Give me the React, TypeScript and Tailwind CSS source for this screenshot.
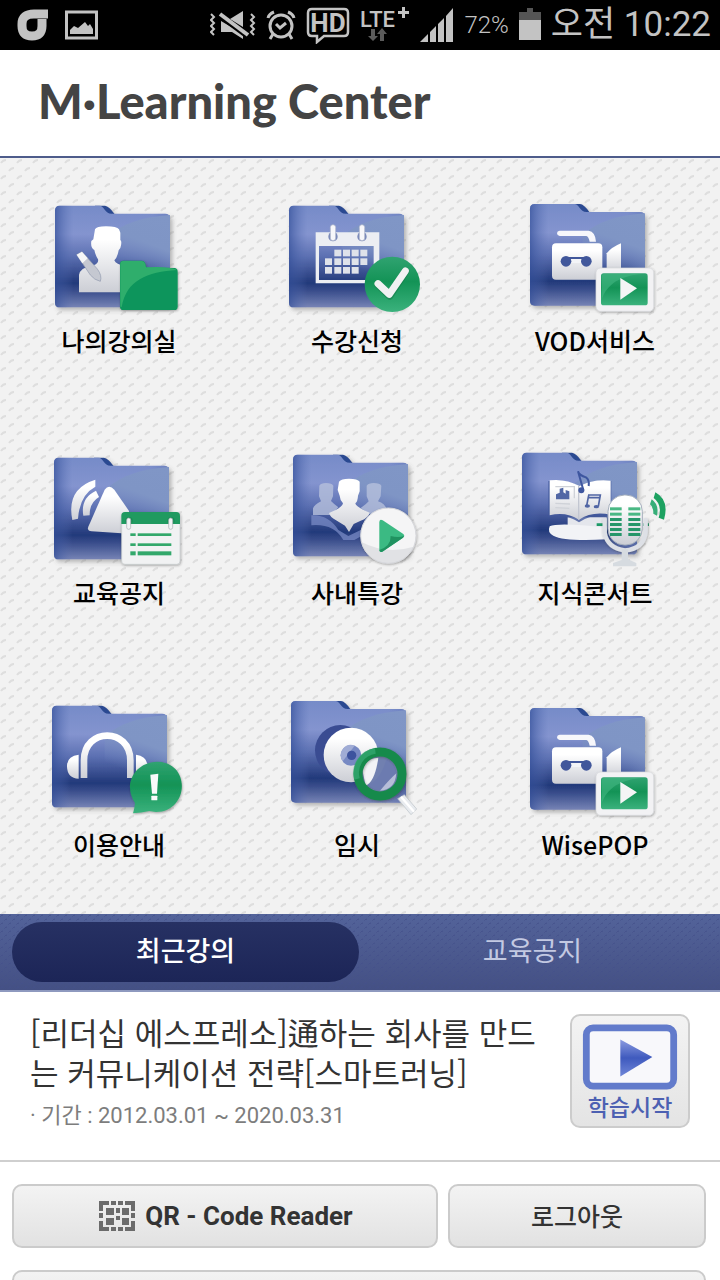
import React from 'react';

interface MenuEntry {
  label: string;
  viewBox: string;
  icon: React.ReactNode;
}

const IconDefs = () => (
  <svg className="absolute h-0 w-0" aria-hidden="true">
    <defs>
      <linearGradient id="folder" x1="0" y1="0" x2="0" y2="1">
        <stop offset="0" stopColor="#768bc8" />
        <stop offset="0.28" stopColor="#8494cf" />
        <stop offset="0.5" stopColor="#5c70b2" />
        <stop offset="0.76" stopColor="#22397a" />
        <stop offset="0.84" stopColor="#3a4e8c" />
        <stop offset="1" stopColor="#7683b5" />
      </linearGradient>
      <linearGradient id="folderEdge" x1="0" y1="0" x2="1" y2="0">
        <stop offset="0" stopColor="#34509a" stopOpacity="0.7" />
        <stop offset="0.16" stopColor="#5870b5" stopOpacity="0" />
        <stop offset="0.85" stopColor="#5870b5" stopOpacity="0" />
        <stop offset="1" stopColor="#6377b4" stopOpacity="0.5" />
      </linearGradient>
      <linearGradient id="shine" x1="0.9" y1="0" x2="0.5" y2="1">
        <stop offset="0" stopColor="#8096c6" />
        <stop offset="0.5" stopColor="#7f95c5" />
        <stop offset="1" stopColor="#6f84bc" stopOpacity="0" />
      </linearGradient>
      <linearGradient id="silver" x1="0" y1="0" x2="0" y2="1">
        <stop offset="0.2" stopColor="#ffffff" />
        <stop offset="1" stopColor="#ccced5" />
      </linearGradient>
      <linearGradient id="greenDown" x1="0" y1="0" x2="0" y2="1">
        <stop offset="0" stopColor="#30a371" />
        <stop offset="0.45" stopColor="#139356" />
        <stop offset="1" stopColor="#3bb27d" />
      </linearGradient>
      <linearGradient id="playBlue" x1="0" y1="0" x2="0" y2="1">
        <stop offset="0" stopColor="#8b9be0" />
        <stop offset="0.5" stopColor="#3f5abe" />
        <stop offset="1" stopColor="#6f86d8" />
      </linearGradient>
      <filter id="shadow" x="-20%" y="-20%" width="150%" height="150%">
        <feDropShadow dx="7" dy="8" stdDeviation="6" floodColor="#555" floodOpacity="0.4" />
      </filter>
      <filter id="softShadow" x="-20%" y="-20%" width="150%" height="150%">
        <feDropShadow dx="2" dy="3" stdDeviation="3" floodColor="#333" floodOpacity="0.4" />
      </filter>
    </defs>
  </svg>
);

const Folder = ({ x, y }: { x: number; y: number }) => (
  <g transform={`translate(${x} ${y})`}>
    <g filter="url(#shadow)">
      <path d="M120 0H150Q162 1 178 24V40H120Z" fill="#2c4a91" />
      <path
        d="M14 0H133C148 0 149 24 170 24H330Q345 24 345 38V291Q345 305 331 305H14Q0 305 0 291V14Q0 0 14 0Z"
        fill="url(#folder)"
      />
    </g>
    <path
      d="M14 0H133C148 0 149 24 170 24H330Q345 24 345 38V291Q345 305 331 305H14Q0 305 0 291V14Q0 0 14 0Z"
      fill="url(#folderEdge)"
    />
    <path d="M158 92C205 52 262 34 345 28V205H158Z" fill="url(#shine)" />
  </g>
);

const ClassroomIcon = () => (
  <>
    <Folder x={45} y={47} />
    <path
      d="M165 118Q169 109 198 109Q231 109 237 118L241 128V150Q247 155 241 174L236 181Q232 203 223 211Q228 224 255 228V307H117V255Q120 233 160 226Q177 220 174 208Q166 195 163 180Q151 173 154 153L160 148Z"
      fill="url(#silver)"
    />
    <path d="M110 194L126 185L172 237Q187 257 181 274Q163 270 151 255Z" fill="#c5c8d1" stroke="#9098ae" strokeWidth="2" />
    <path d="M110 194L126 185L143 205L127 220Z" fill="#f5f6f8" />
    <g filter="url(#softShadow)">
      <path d="M250 212H306Q316 212 318 230L324 234H403Q413 234 413 245V350Q413 360 403 360H250Q240 360 240 350V222Q240 212 250 212Z" fill="#10955c" />
    </g>
    <path d="M250 213H306Q315 213 318 232Q390 228 412 240C320 246 260 270 245 351L241 350V222Q241 213 250 213Z" fill="#2fae6c" />
  </>
);

const ApplyIcon = () => {
  const cells = [
    [178, 179], [204, 179], [230, 179], [256, 179],
    [150, 205], [178, 205], [204, 205], [230, 205], [256, 205],
    [150, 231], [178, 231], [204, 231], [230, 231],
  ];
  return (
    <>
      <Folder x={42} y={47} />
      <path d="M122 127H313V280H122ZM132 168V270H296V168Z" fill="#eceef3" fillRule="evenodd" />
      <circle cx="174" cy="140" r="14" fill="#7787b8" />
      <circle cx="261" cy="140" r="14" fill="#7787b8" />
      <rect x="166" y="104" width="16" height="48" rx="8" fill="#f7f7fa" stroke="#a9b0c7" strokeWidth="2" />
      <rect x="253" y="104" width="16" height="48" rx="8" fill="#f7f7fa" stroke="#a9b0c7" strokeWidth="2" />
      {cells.map(([x, y]) => (
        <rect key={`${x}-${y}`} x={x} y={y} width="21" height="20" fill="#dfe2ea" />
      ))}
      <circle cx="352" cy="283" r="83" fill="url(#greenDown)" />
      <path d="M310 284L344 317L391 245" fill="none" stroke="#137545" strokeWidth="24" strokeLinecap="round" strokeLinejoin="round" opacity="0.5" />
      <path d="M309 281L343 313L391 243" fill="none" stroke="#f0f1f2" strokeWidth="21" strokeLinecap="round" strokeLinejoin="round" />
    </>
  );
};

const VideoIcon = () => (
  <>
    <Folder x={60} y={42} />
    <path d="M149 122H236Q256 125 258 155H239Q236 140 229 138H149Q141 137 141 130Q141 123 149 122Z" fill="#f7f7fb" />
    <rect x="126" y="160" width="151" height="109" rx="12" fill="url(#silver)" />
    <path d="M290 190Q304 172 333 160V250H290Z" fill="url(#silver)" />
    <path d="M168 201H230V215H168Z" fill="#41579b" />
    <path d="M180 207H217V219H180Z" fill="#f3f4f7" />
    <circle cx="168" cy="214" r="16" fill="#41579b" />
    <circle cx="229" cy="214" r="16" fill="#41579b" />
    <rect x="258" y="234" width="173" height="130" rx="14" fill="#f2f2f4" stroke="#d8dadd" strokeWidth="2" filter="url(#softShadow)" />
    <rect x="273" y="250" width="140" height="96" rx="8" fill="url(#greenDown)" />
    <path d="M275 330C290 280 335 257 395 252L282 252Q275 252 275 260Z" fill="#42b782" opacity="0.6" />
    <path d="M331 264L381 295L331 329Z" fill="#f4f5f5" />
  </>
);

const NoticeIcon = () => (
  <>
    <Folder x={42} y={53} />
    <path d="M166 119V140Q119 165 114 236L97 240Q78 146 166 119Z" fill="url(#silver)" />
    <path d="M168 152L177 171Q148 188 149 226L130 227Q121 174 168 152Z" fill="url(#silver)" />
    <path d="M194 149Q207 132 223 149L267 213V281L155 274Q140 273 145 260Z" fill="url(#silver)" />
    <rect x="245" y="218" width="175" height="155" rx="10" fill="#f1f2f3" stroke="#c6cacc" strokeWidth="2" filter="url(#softShadow)" />
    <path d="M244 252V227Q244 216 255 216H409Q420 216 420 227V252Z" fill="#209a60" />
    {[265, 391].map((x) => (
      <g key={x}>
        <circle cx={x + 2} cy="242" r="11" fill="#0e784a" opacity="0.4" />
        <rect x={x - 5} y="234" width="12" height="34" rx="6" fill="#f2f3f5" stroke="#a7adb0" strokeWidth="2" />
      </g>
    ))}
    {[280, 310, 334].map((y, i) => (
      <g key={y} fill="#32a86b">
        <rect x="271" y={y} width="16" height={i === 2 ? 12 : 8} />
        <rect x="293" y={y} width="101" height={i === 2 ? 12 : 8} />
      </g>
    ))}
  </>
);

const LectureIcon = () => (
  <>
    <Folder x={54} y={44} />
    <g fill="#b7c0dc">
      <path d="M133 137Q137 129 153 129Q171 129 175 137L174 169L168 183Q178 193 190 202L168 225H114V205Q118 194 138 184L132 169Z" opacity="0.8" />
      <path d="M275 137Q280 129 296 129Q315 129 319 137L317 169L309 184Q330 190 337 212L284 222L257 204Q274 193 281 184L275 169Z" opacity="0.8" />
    </g>
    <path d="M109 226Q160 223 190 270L220 288L265 266V285L238 300H205Q176 250 109 256Z" fill="#7889c4" opacity="0.75" />
    <path
      d="M192 125Q198 116 222 116Q248 116 254 125V154L249 167Q248 185 241 190Q242 201 284 218Q281 233 257 242L236 252L222 276L210 257L182 240Q166 232 162 219Q201 204 204 190Q195 181 194 167L188 150Z"
      fill="url(#silver)"
    />
    <circle cx="340" cy="287" r="83" fill="#f5f5f6" stroke="#d7d8dc" strokeWidth="3" filter="url(#softShadow)" />
    <path d="M259 306A83 83 0 0 0 416 320Q335 345 259 306Z" fill="#d4d5da" opacity="0.6" />
    <path d="M313 246Q314 236 323 241L385 282Q391 288 384 293L322 335Q313 339 313 330Z" fill="#3bba83" />
    <path d="M387 288L384 293L322 335Q315 338 313 330Q348 318 347 288Q370 294 387 288Z" fill="#209260" />
  </>
);

const ConcertIcon = () => (
  <>
    <Folder x={36} y={38} />
    <path d="M173 232H290V275H173Z" fill="#e4e6ec" />
    <path d="M119 259Q145 247 290 263V298Q165 305 130 287Q111 278 119 259Z" fill="#f2f3f6" />
    <path d="M115 231V123Q164 116 209 139Q248 116 304 123V229Q245 219 207 247Q167 220 115 231Z" fill="#41579b" opacity="0.8" />
    <path d="M119 226V121Q166 115 209 138Q250 116 302 122V224Q245 213 207 239Q168 214 119 226Z" fill="url(#silver)" />
    <path d="M206 138V239" stroke="#c2c6d1" strokeWidth="4" />
    <path d="M136 140H193V175M136 190L180 192M136 203L178 205" fill="none" stroke="#cfd2d8" strokeWidth="4" />
    <path d="M138 178V163L149 158V146L160 143V157L167 161V150L178 154V178Z" fill="#5267a5" />
    <path d="M234 165H271L265 199M236 166L230 197M234 173H270" fill="none" stroke="#5065a4" strokeWidth="5" />
    <ellipse cx="232" cy="198" rx="8" ry="5" fill="#5065a4" />
    <ellipse cx="259" cy="200" rx="8" ry="5" fill="#5065a4" />
    <path d="M204 94L220 150M204 94Q208 106 228 112Q239 120 236 138" fill="none" stroke="#3e569f" strokeWidth="6" />
    <circle cx="214" cy="151" r="9" fill="#3e569f" />
    <path d="M260 254H290M400 254H417" stroke="#1d9b67" strokeWidth="8" />
    <path d="M284 235V278Q292 325 345 331Q402 326 407 275V235" fill="none" stroke="#dde0e6" strokeWidth="13" filter="url(#softShadow)" />
    <path d="M335 328H354V358L379 369V379H309V369L335 360Z" fill="#d6dbe0" />
    <rect x="294" y="165" width="103" height="150" rx="49" fill="url(#silver)" stroke="#a4aebc" strokeWidth="3" />
    {[202, 218, 234, 249, 264, 279].map((y, i) => (
      <g key={y} fill={i < 2 ? '#49b884' : '#26966a'}>
        <rect x="300" y={y} width="35" height="9" />
        <rect x="355" y={y} width="36" height="9" />
      </g>
    ))}
    <path d="M436 157Q479 180 462 239L446 233Q458 194 431 174Z" fill="#1da261" />
    <path d="M425 178Q448 194 441 227L430 221Q430 199 420 193Z" fill="#37ae78" />
  </>
);

const GuideIcon = () => (
  <>
    <Folder x={36} y={47} />
    <path d="M132 264V211C132 112 271 112 271 211V264" fill="none" stroke="url(#silver)" strokeWidth="20" />
    <path d="M116 194V266Q82 264 81 230Q80 198 116 194Z" fill="url(#silver)" />
    <path d="M288 194V266Q322 264 323 230Q322 198 288 194Z" fill="url(#silver)" />
    <path d="M350 215C454 215 448 365 348 366L328 363Q303 368 279 370Q283 359 285 339C248 284 283 218 350 215Z" fill="url(#greenDown)" filter="url(#softShadow)" />
    <path d="M331 254L355 251L351 311H336Z" fill="#f8fafa" />
    <rect x="334" y="317" width="18" height="14" rx="2" fill="#f8fafa" />
  </>
);

const SearchIcon = () => (
  <>
    <Folder x={48} y={33} />
    <circle cx="196" cy="181" r="76" fill="#3a4c92" />
    <circle cx="228" cy="195" r="82" fill="url(#silver)" />
    <circle cx="228" cy="196" r="31" fill="#7789c3" />
    <path d="M203 214A31 31 0 0 1 239 167Z" fill="#a0acd5" />
    <circle cx="230" cy="196" r="14" fill="#3d539e" />
    <circle cx="314" cy="250" r="57" fill="#7180b0" />
    <path d="M272 287Q300 275 310 203Q272 205 262 240Z" fill="#f2f3f6" />
    <path d="M335 203Q366 220 364 260Q348 295 305 302L273 287Q318 273 335 203Z" fill="#6c7bb0" />
    <path d="M364 250Q360 300 315 302Q342 270 364 250Z" fill="#d6dae9" opacity="0.7" />
    <circle cx="315" cy="252" r="66" fill="none" stroke="#178a4c" strokeWidth="27" filter="url(#softShadow)" />
    <path d="M246 267A66 66 0 0 1 301 183" fill="none" stroke="#3bae78" strokeWidth="17" opacity="0.65" />
    <path d="M368 326L388 314L425 357L408 374Z" fill="#e8ebef" stroke="#b9c1c6" strokeWidth="2" />
    <path d="M378 320L417 365" stroke="#ffffff" strokeWidth="7" />
  </>
);

const menu: MenuEntry[] = [
  { label: '나의강의실', viewBox: '15 18 444 372', icon: <ClassroomIcon /> },
  { label: '수강신청', viewBox: '24 18 444 372', icon: <ApplyIcon /> },
  { label: 'VOD서비스', viewBox: '33 18 444 372', icon: <VideoIcon /> },
  { label: '교육공지', viewBox: '15 24 444 372', icon: <NoticeIcon /> },
  { label: '사내특강', viewBox: '24 24 444 372', icon: <LectureIcon /> },
  { label: '지식콘서트', viewBox: '33 24 444 372', icon: <ConcertIcon /> },
  { label: '이용안내', viewBox: '15 30 444 372', icon: <GuideIcon /> },
  { label: '임시', viewBox: '24 30 444 372', icon: <SearchIcon /> },
  { label: 'WisePOP', viewBox: '33 18 444 372', icon: <VideoIcon /> },
];

const StatusBar = () => (
  <div className="flex h-[50px] items-center justify-between bg-black pr-[9px] pl-4 text-[#c3c3c3]">
    <div className="flex items-center gap-4">
      <svg width="33" height="34" viewBox="0 0 33 34" fill="none">
        <path d="M32 6H18Q6 6 6 16V18Q6 28 16 28Q26 28 26 18V11" stroke="currentColor" strokeWidth="9" />
      </svg>
      <svg width="33" height="30" viewBox="0 0 33 30">
        <rect x="1.5" y="2" width="30" height="26" fill="none" stroke="currentColor" strokeWidth="3" />
        <path d="M5 24V20L9 16L13 18L20 12L23 16L25 14L28 19V24Z" fill="currentColor" />
      </svg>
    </div>
    <div className="flex items-center gap-2.5">
      <svg width="46" height="30" viewBox="0 0 46 30" fill="none" stroke="currentColor">
        <path d="M1 4L4 7L1 10L4 13L1 16L4 19L1 22L4 25M41 4L44 7L41 10L44 13L41 16L44 19L41 22L44 25" strokeWidth="2" />
        <path d="M20 9L33 1V17ZM11 11V22H22L33 29V24Z" fill="currentColor" stroke="none" />
        <path d="M9 7L37 28" stroke="#000000" strokeWidth="2" />
        <path d="M10 4L38 25" strokeWidth="4" />
      </svg>
      <svg width="30" height="30" viewBox="0 0 30 30" fill="none" stroke="currentColor" strokeWidth="3">
        <circle cx="15" cy="16" r="11" />
        <path d="M10 14L14 18L20 13M2 8Q3 4 8 2M28 8Q27 4 22 2M7 24L4 29M23 24L26 29" />
      </svg>
      <svg width="44" height="38" viewBox="0 0 44 38">
        <path d="M6 3H38Q42 3 42 7V26Q42 30 38 30H18L11 36V30H6Q2 30 2 26V7Q2 3 6 3Z" fill="none" stroke="currentColor" strokeWidth="2.5" />
        <text x="22" y="26" textAnchor="middle" fontSize="26" fill="currentColor" className="font-['Roboto',sans-serif] font-bold">HD</text>
      </svg>
      <svg width="50" height="38" viewBox="0 0 50 38" fill="currentColor">
        <text x="0" y="21" fontSize="22" className="font-['Roboto',sans-serif] font-medium">LTE</text>
        <path d="M42 1H45V5H49V8H45V12H42V8H38V5H42Z" />
        <path d="M11 23H15V30H18L13 35L8 30H11ZM20 35V28H17L22 22L27 28H24V35Z" fill="#5b5b5b" />
      </svg>
      <svg width="34" height="36" viewBox="0 0 34 36" fill="currentColor">
        <path d="M0 35L8 27V35ZM10 25L16 19V35H10ZM18 17L24 11V35H18ZM26 9L33 1V35H26Z" />
      </svg>
      <span className="font-['Roboto',sans-serif] text-2xl font-light">72%</span>
      <svg width="22" height="34" viewBox="0 0 22 34">
        <path d="M8 0H14V4H22V12H0V4H8Z" fill="#555555" />
        <rect y="12" width="22" height="20" fill="currentColor" />
      </svg>
      <span className="font-['Roboto','Noto_Sans_CJK_KR',sans-serif] text-[35px] leading-[50px] whitespace-nowrap">오전 10:22</span>
    </div>
  </div>
);

const DotPattern = ({ id, size, color }: { id: string; size: number; color: string }) => (
  <svg className="absolute inset-0 h-full w-full" aria-hidden="true">
    <pattern id={id} width={size} height={size} patternUnits="userSpaceOnUse" viewBox="0 0 16 16">
      <path d="M1 5Q3 2 6 2M9 13Q11 10 14 10" fill="none" stroke={color} strokeWidth="2" />
    </pattern>
    <rect width="100%" height="100%" fill={`url(#${id})`} />
  </svg>
);

const QrIcon = () => (
  <svg width="40" height="34" viewBox="0 0 40 34" fill="#6b6b6b">
    <path d="M2 2H12V6H6V12H2ZM28 2H38V12H34V6H28ZM2 22H6V28H12V32H2ZM34 22H38V32H28V28H34ZM2 14H6V19H2ZM34 14H38V19H34Z" />
    <path d="M14 2H19V6H14ZM21 2H26V6H21ZM14 28H19V32H14ZM21 28H26V32H21ZM9 9H17V16H9ZM19 9H23V14H19ZM25 9H32V16H25ZM9 19H17V26H9ZM19 17H23V21H19ZM25 19H32V26H25Z" />
  </svg>
);

const footerButton =
  'flex h-16 items-center justify-center gap-2 rounded-[10px] border-2 border-[#cbcbcb] bg-linear-to-b from-[#f3f3f3] to-[#e2e2e2] text-[#333333]';

export default function App() {
  return (
    <div className="relative h-screen overflow-hidden bg-white font-['Noto_Sans_CJK_KR',sans-serif]" lang="ko">
      <IconDefs />
      <StatusBar />

      <header className="flex h-[108px] items-center border-b-2 border-[#4e5c8b] px-[38px]">
        <h1 className="pb-1 font-['Lato',sans-serif] text-[47px] font-black whitespace-nowrap text-[#444444]">M·Learning Center</h1>
      </header>

      {/* Menu */}
      <nav className="relative bg-[#f2f2f2]">
        <DotPattern id="paper" size={16} color="#dedede" />
        <div className="relative grid grid-cols-3 pr-1.5">
          {menu.map((item) => (
            <a key={item.label} href="#" className="flex flex-col items-center pt-[38px] pb-[50px]">
              <svg width="148" height="124" viewBox={item.viewBox}>{item.icon}</svg>
              <span className="text-[25px] leading-10 font-medium text-black">{item.label}</span>
            </a>
          ))}
        </div>
      </nav>

      {/* Tabs */}
      <div className="relative border-b-2 border-[#8e99bf] bg-linear-to-b from-[#53639a] to-[#445084]">
        <DotPattern id="navy" size={8} color="#43508a" />
        <div className="relative grid grid-cols-2 py-2 pr-[14px] pl-3" role="tablist">
          <button role="tab" aria-selected="true" className="h-[60px] rounded-full bg-linear-to-b from-[#273163] to-[#1c2557] pb-1 text-[27px] font-medium text-white">
            최근강의
          </button>
          <button role="tab" aria-selected="false" className="h-[60px] pb-1 text-[27px] text-[#c3c9e2]">
            교육공지
          </button>
        </div>
      </div>

      {/* Recent lecture */}
      <section className="flex items-start justify-between gap-5 border-b-2 border-[#cfcfcf] px-[30px] pt-5 pb-6">
        <div className="flex-1">
          <h2 className="text-[31px] leading-10 break-all text-[#333333]">
            [리더십 에스프레소]通하는 회사를 만드는 커뮤니케이션 전략[스마트러닝]
          </h2>
          <p className="mt-1 font-['Roboto','Noto_Sans_CJK_KR',sans-serif] text-[22px] leading-10 text-[#7d7d7d]">
            · 기간 : 2012.03.01 ~ 2020.03.31
          </p>
        </div>
        <button className="mt-0.5 flex h-[114px] w-[120px] flex-col items-center rounded-[10px] border-2 border-[#cccccc] bg-linear-to-b from-[#f3f3f3] to-[#e4e4e4] pt-2">
          <svg width="98" height="66" viewBox="0 0 98 68">
            <rect x="4" y="4" width="90" height="60" rx="7" fill="#f8f8fb" stroke="#627bcb" strokeWidth="7" />
            <path d="M39 16L72 34L39 54Z" fill="url(#playBlue)" />
          </svg>
          <span className="text-[23px] leading-8 font-medium text-[#4c60b2]">학습시작</span>
        </button>
      </section>

      <footer className="grid grid-cols-[33fr_20fr] gap-x-2.5 gap-y-[22px] pt-[22px] pr-[14px] pl-3">
        <button className={footerButton}>
          <QrIcon />
          <span className="font-['Roboto',sans-serif] text-[26px] font-bold">QR - Code Reader</span>
        </button>
        <button className={footerButton}>
          <span className="text-[25px] font-medium">로그아웃</span>
        </button>
        <button className={`${footerButton} col-span-2`} aria-label="PC" />
      </footer>
    </div>
  );
}
